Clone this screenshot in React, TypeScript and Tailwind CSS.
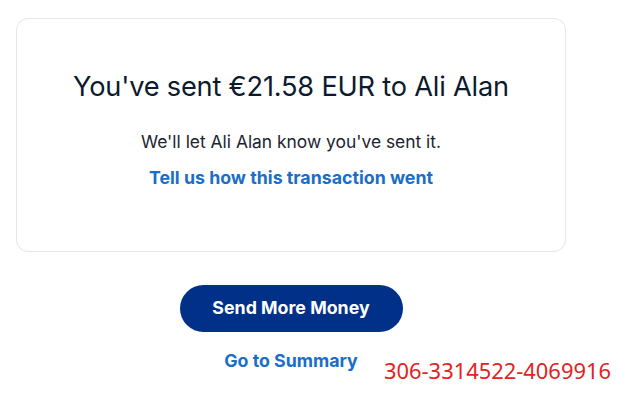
import React from 'react';

const App = () => {
  return (
    <div className="relative w-[631px] h-[401px] bg-white overflow-hidden" style={{ fontFamily: 'Inter, "Liberation Sans", sans-serif' }}>
      <div className="ml-4 w-[550px] pt-[18px] flex flex-col items-center">
        <div className="w-full h-[234px] border border-[#e6e6e6] rounded-xl flex flex-col items-center pt-[52px]">
          <h1 className="text-[27.2px] leading-8 text-[#0c1a2e] font-normal tracking-[-0.2px]">
            You've sent €21.58 EUR to Ali Alan
          </h1>
          <p className="mt-[27px] text-[17.4px] leading-6 text-[#1c2431]">
            We'll let Ali Alan know you've sent it.
          </p>
          <a href="#" className="mt-3 text-[17.8px] leading-6 font-bold text-[#1a6ec8]">
            Tell us how this transaction went
          </a>
        </div>
        <button className="mt-[33px] w-[223px] h-[47px] rounded-full bg-[#003087] text-white text-[17.8px] font-bold">
          Send More Money
        </button>
        <a href="#" className="mt-[17px] text-[17.8px] leading-6 font-bold text-[#1a6ec8]">
          Go to Summary
        </a>
      </div>
      <div className="absolute left-[384px] top-[357px] text-[21.9px] leading-7 text-[#e02424]" style={{ fontFamily: '"Noto Sans", sans-serif' }}>
        306-3314522-4069916
      </div>
    </div>
  );
};

export default App;
